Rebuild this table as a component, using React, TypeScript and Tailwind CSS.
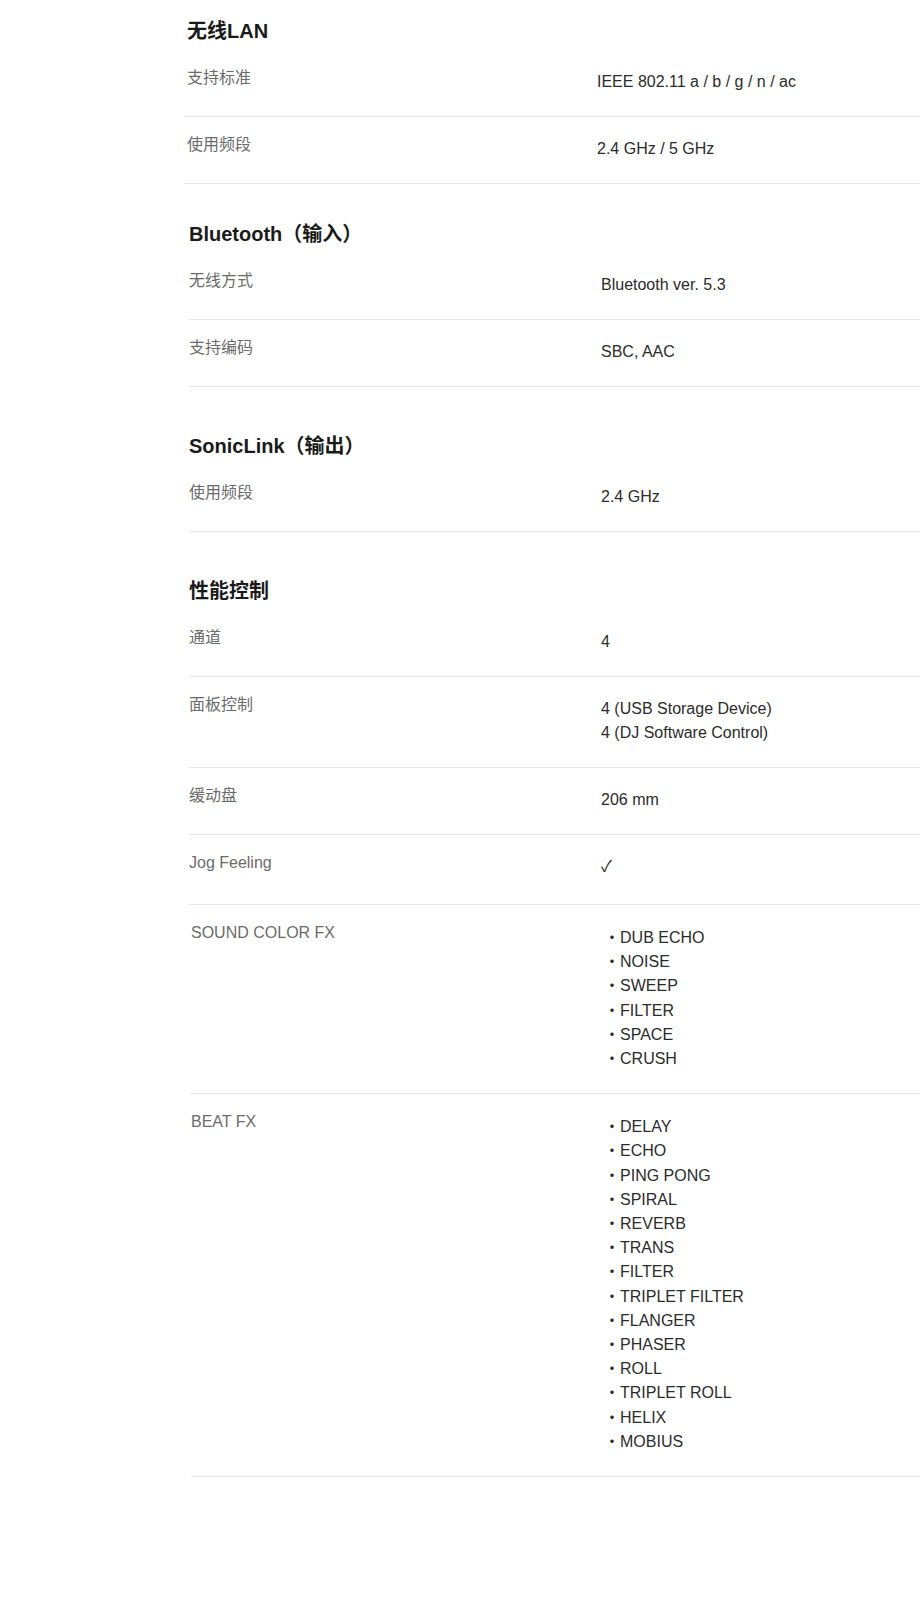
type Row = {
  label: string;
  values: string[];
  list?: boolean;
  fx?: boolean;
  tall?: boolean;
};

type Section = {
  title: string;
  gap: string;
  indent: string;
  inset: string;
  labelW: string;
  rows: Row[];
};

const sections: Section[] = [
  {
    title: "无线LAN",
    gap: "mt-0",
    indent: "ml-[184px]",
    inset: "pl-[3px]",
    labelW: "w-[410px]",
    rows: [
      { label: "支持标准", values: ["IEEE 802.11 a / b / g / n / ac"] },
      { label: "使用频段", values: ["2.4 GHz / 5 GHz"] },
    ],
  },
  {
    title: "Bluetooth（输入）",
    gap: "mt-[36px]",
    indent: "ml-[189px]",
    inset: "pl-0",
    labelW: "w-[412px]",
    rows: [
      { label: "无线方式", values: ["Bluetooth ver. 5.3"] },
      { label: "支持编码", values: ["SBC, AAC"] },
    ],
  },
  {
    title: "SonicLink（输出）",
    gap: "mt-[45px]",
    indent: "ml-[189px]",
    inset: "pl-0",
    labelW: "w-[412px]",
    rows: [{ label: "使用频段", values: ["2.4 GHz"] }],
  },
  {
    title: "性能控制",
    gap: "mt-[45px]",
    indent: "ml-[189px]",
    inset: "pl-0",
    labelW: "w-[412px]",
    rows: [
      { label: "通道", values: ["4"] },
      { label: "面板控制", values: ["4 (USB Storage Device)", "4 (DJ Software Control)"] },
      { label: "缓动盘", values: ["206 mm"] },
      { label: "Jog Feeling", values: ["✓"], tall: true },
      {
        label: "SOUND COLOR FX",
        fx: true,
        list: true,
        values: ["DUB ECHO", "NOISE", "SWEEP", "FILTER", "SPACE", "CRUSH"],
      },
      {
        label: "BEAT FX",
        fx: true,
        list: true,
        values: [
          "DELAY",
          "ECHO",
          "PING PONG",
          "SPIRAL",
          "REVERB",
          "TRANS",
          "FILTER",
          "TRIPLET FILTER",
          "FLANGER",
          "PHASER",
          "ROLL",
          "TRIPLET ROLL",
          "HELIX",
          "MOBIUS",
        ],
      },
    ],
  },
];

const font = "font-['Liberation_Sans','Noto_Sans_CJK_SC',sans-serif]";

const SpecRow = ({ row, inset, labelW }: { row: Row; inset: string; labelW: string }) => (
  <div
    className={`flex items-start border-b border-[#e6e6e6] pt-4 ${row.tall ? "pb-[25px]" : "pb-[22px]"} ${
      row.fx ? "ml-[2px]" : ""
    } ${inset}`}
  >
    <div className={`text-[16px] leading-6 text-[#6b6b6b] ${row.fx ? "w-[410px]" : labelW}`}>
      {row.label}
    </div>
    <div className="mt-1 text-[16px] text-[#2b2b2b]">
      {row.list ? (
        <div className="mt-px ml-[3px]">
          {row.values.map((v) => (
            <p key={v} className="leading-[24.2px]">
              ・{v}
            </p>
          ))}
        </div>
      ) : (
        row.values.map((v) => (
          <p key={v} className="leading-6">
            {v}
          </p>
        ))
      )}
    </div>
  </div>
);

export default function App() {
  return (
    <div className={`min-h-[1605px] w-[920px] bg-white pt-[17px] pb-[130px] ${font}`}>
      {sections.map((s) => (
        <section key={s.title} className={`${s.gap} ${s.indent}`}>
          <h2 className={`mb-[5px] text-[20px] font-bold leading-7 text-[#1a1a1a] ${s.inset}`}>{s.title}</h2>
          {s.rows.map((r) => (
            <SpecRow key={r.label} row={r} inset={s.inset} labelW={s.labelW} />
          ))}
        </section>
      ))}
    </div>
  );
}
